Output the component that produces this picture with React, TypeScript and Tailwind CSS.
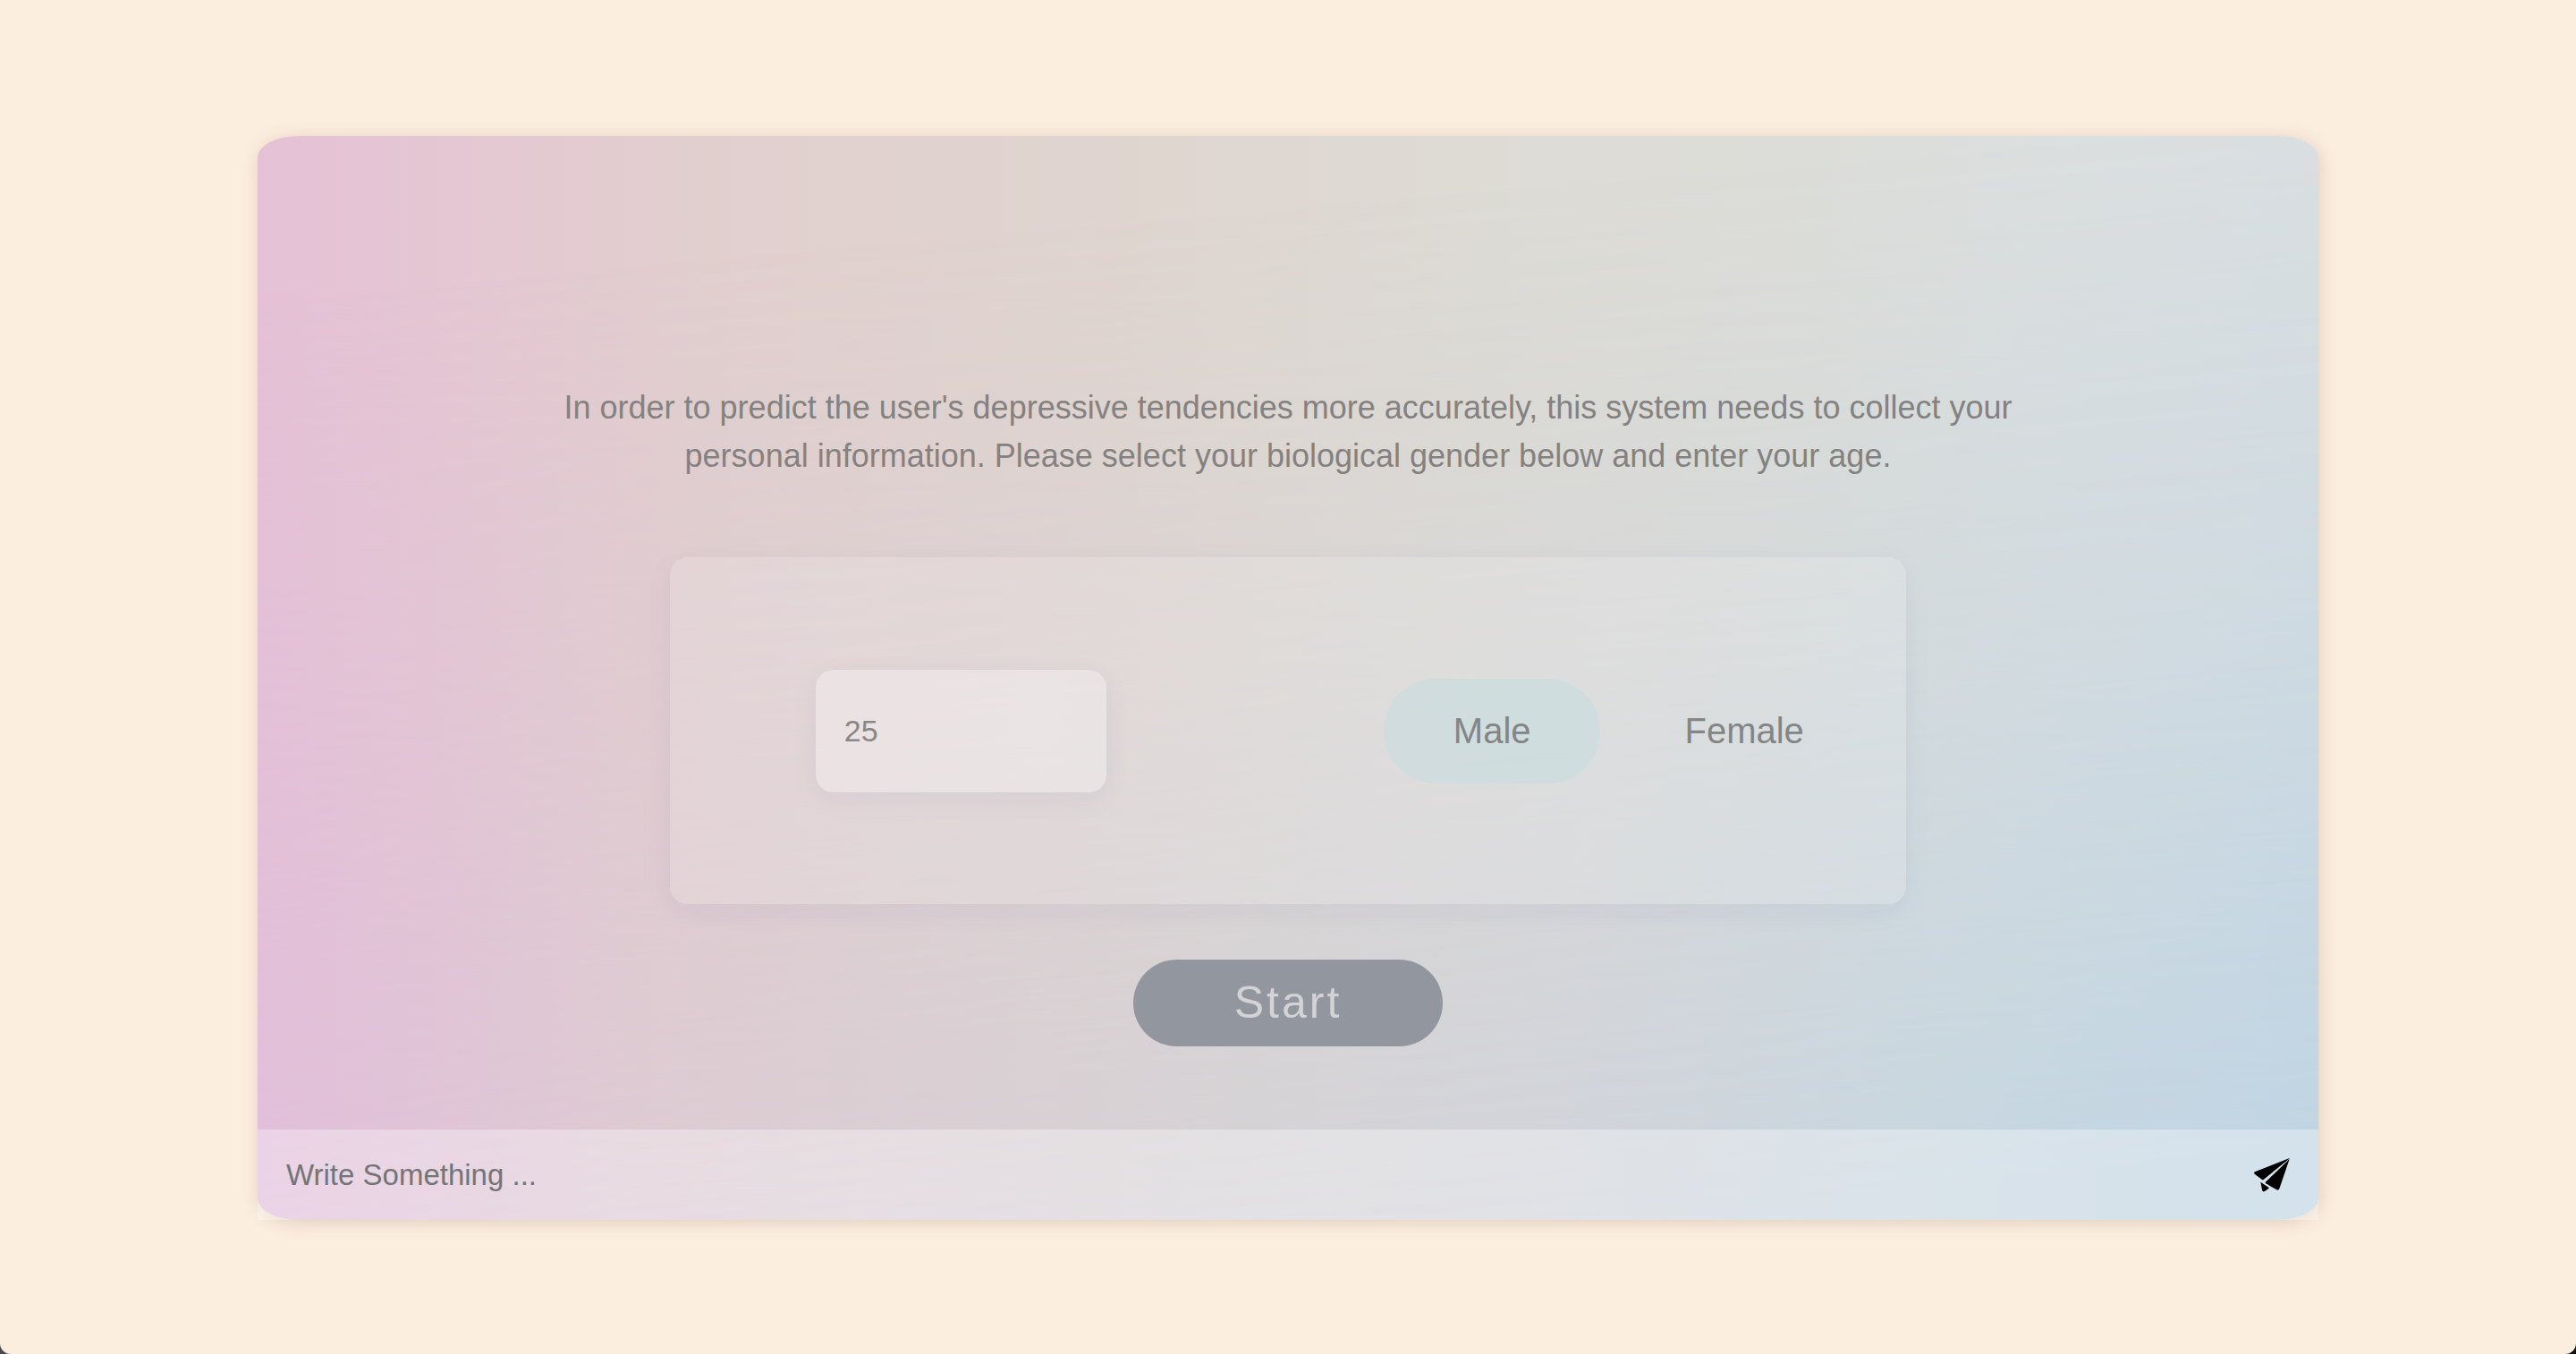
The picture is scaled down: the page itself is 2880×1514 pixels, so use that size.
import { useState } from "react";

const genders = ["Male", "Female"];

function SendIcon() {
  return (
    <svg viewBox="0 0 120 114" className="h-[38px] w-10" fill="currentColor" aria-hidden="true">
      <path d="M119 0 3 46Q-2 49 2 53L27 72Q30 74 33 71L118 2Z" />
      <path d="M119 3 85 103Q82 109 76 106L40 85Q37 82 40 79Z" />
      <path d="M22 80 49 98Q51 101 48 103L36 111Q28 115 27 106Z" />
    </svg>
  );
}

export default function App() {
  const [age, setAge] = useState("25");
  const [gender, setGender] = useState("Male");
  const [message, setMessage] = useState("");

  return (
    <div className="min-h-screen bg-[linear-gradient(90deg,#4a4a4c_50%,#111111_50%)] font-['Liberation_Sans',Arial,sans-serif]">
      <main className="flex min-h-screen flex-col items-center rounded-b-[12px] bg-[#fceede] pt-[152px] pb-[150px]">
        <section className="relative isolate flex w-4/5 flex-1 flex-col rounded-[2%] bg-[linear-gradient(90deg,#e5c1d6_0%,#e4c7d2_10%,#e1cfce_22%,#dfd5cf_42%,#dddbd4_59%,#dcddd8_75%,#dbdfdf_88%,#dadfe1_100%)] shadow-[2px_3px_20px_rgba(70,50,50,0.17)]">
          <div className="absolute inset-0 -z-10 rounded-[2%] bg-[linear-gradient(90deg,#e0bedb_0%,#dec2d8_7%,#dccad3_18%,#d8ced4_32%,#d4d2d6_48%,#d0d3da_63%,#c7d6df_80%,#bfd4e3_100%)] [mask-image:linear-gradient(175deg,transparent_12%,rgba(0,0,0,0.38)_48%,black_95%)]" />

          <form
            id="profile"
            className="flex flex-1 flex-col items-center justify-end pb-[93px]"
            onSubmit={(e) => e.preventDefault()}
          >
            <p className="w-[72%] text-center text-[36px] leading-[54px] text-[#848280]">
              In order to predict the user's depressive tendencies more accurately, this system needs to collect your
              personal information. Please select your biological gender below and enter your age.
            </p>

            <div className="mt-[86px] flex h-[388px] w-3/5 items-center justify-between rounded-[20px] bg-white/15 pr-[60px] pl-[163px] shadow-[0_8px_32px_rgba(31,38,135,0.05)]">
              <input
                type="text"
                inputMode="numeric"
                aria-label="Age"
                value={age}
                onChange={(e) => setAge(e.target.value)}
                className="h-[137px] w-[325px] rounded-[20px] bg-white/30 px-8 text-[34px] text-[#8a8684] shadow-[0_8px_32px_rgba(31,38,135,0.05)] outline-none"
              />
              <div className="flex gap-10" role="group" aria-label="Biological gender">
                {genders.map((g) => (
                  <button
                    key={g}
                    type="button"
                    aria-pressed={gender === g}
                    onClick={() => setGender(g)}
                    className={`h-[117px] w-[242px] rounded-[58px] text-[40px] text-[#848686] ${
                      gender === g ? "bg-[#b4dfe2]/30" : ""
                    }`}
                  >
                    {g}
                  </button>
                ))}
              </div>
            </div>

            <button
              type="submit"
              className="mt-[62px] h-[97px] w-[15%] rounded-full bg-[#92969f] text-[50px] tracking-[3px] text-[#d3d3d6]"
            >
              Start
            </button>
          </form>

          <div className="flex h-[101px] items-center bg-white/32 px-8">
            <input
              type="text"
              aria-label="Message"
              placeholder="Write Something ..."
              value={message}
              onChange={(e) => setMessage(e.target.value)}
              className="min-w-0 flex-1 bg-transparent text-[33px] outline-none placeholder:text-[#757575]"
            />
            <button type="button" aria-label="Send" className="text-black">
              <SendIcon />
            </button>
          </div>
        </section>
      </main>
    </div>
  );
}
